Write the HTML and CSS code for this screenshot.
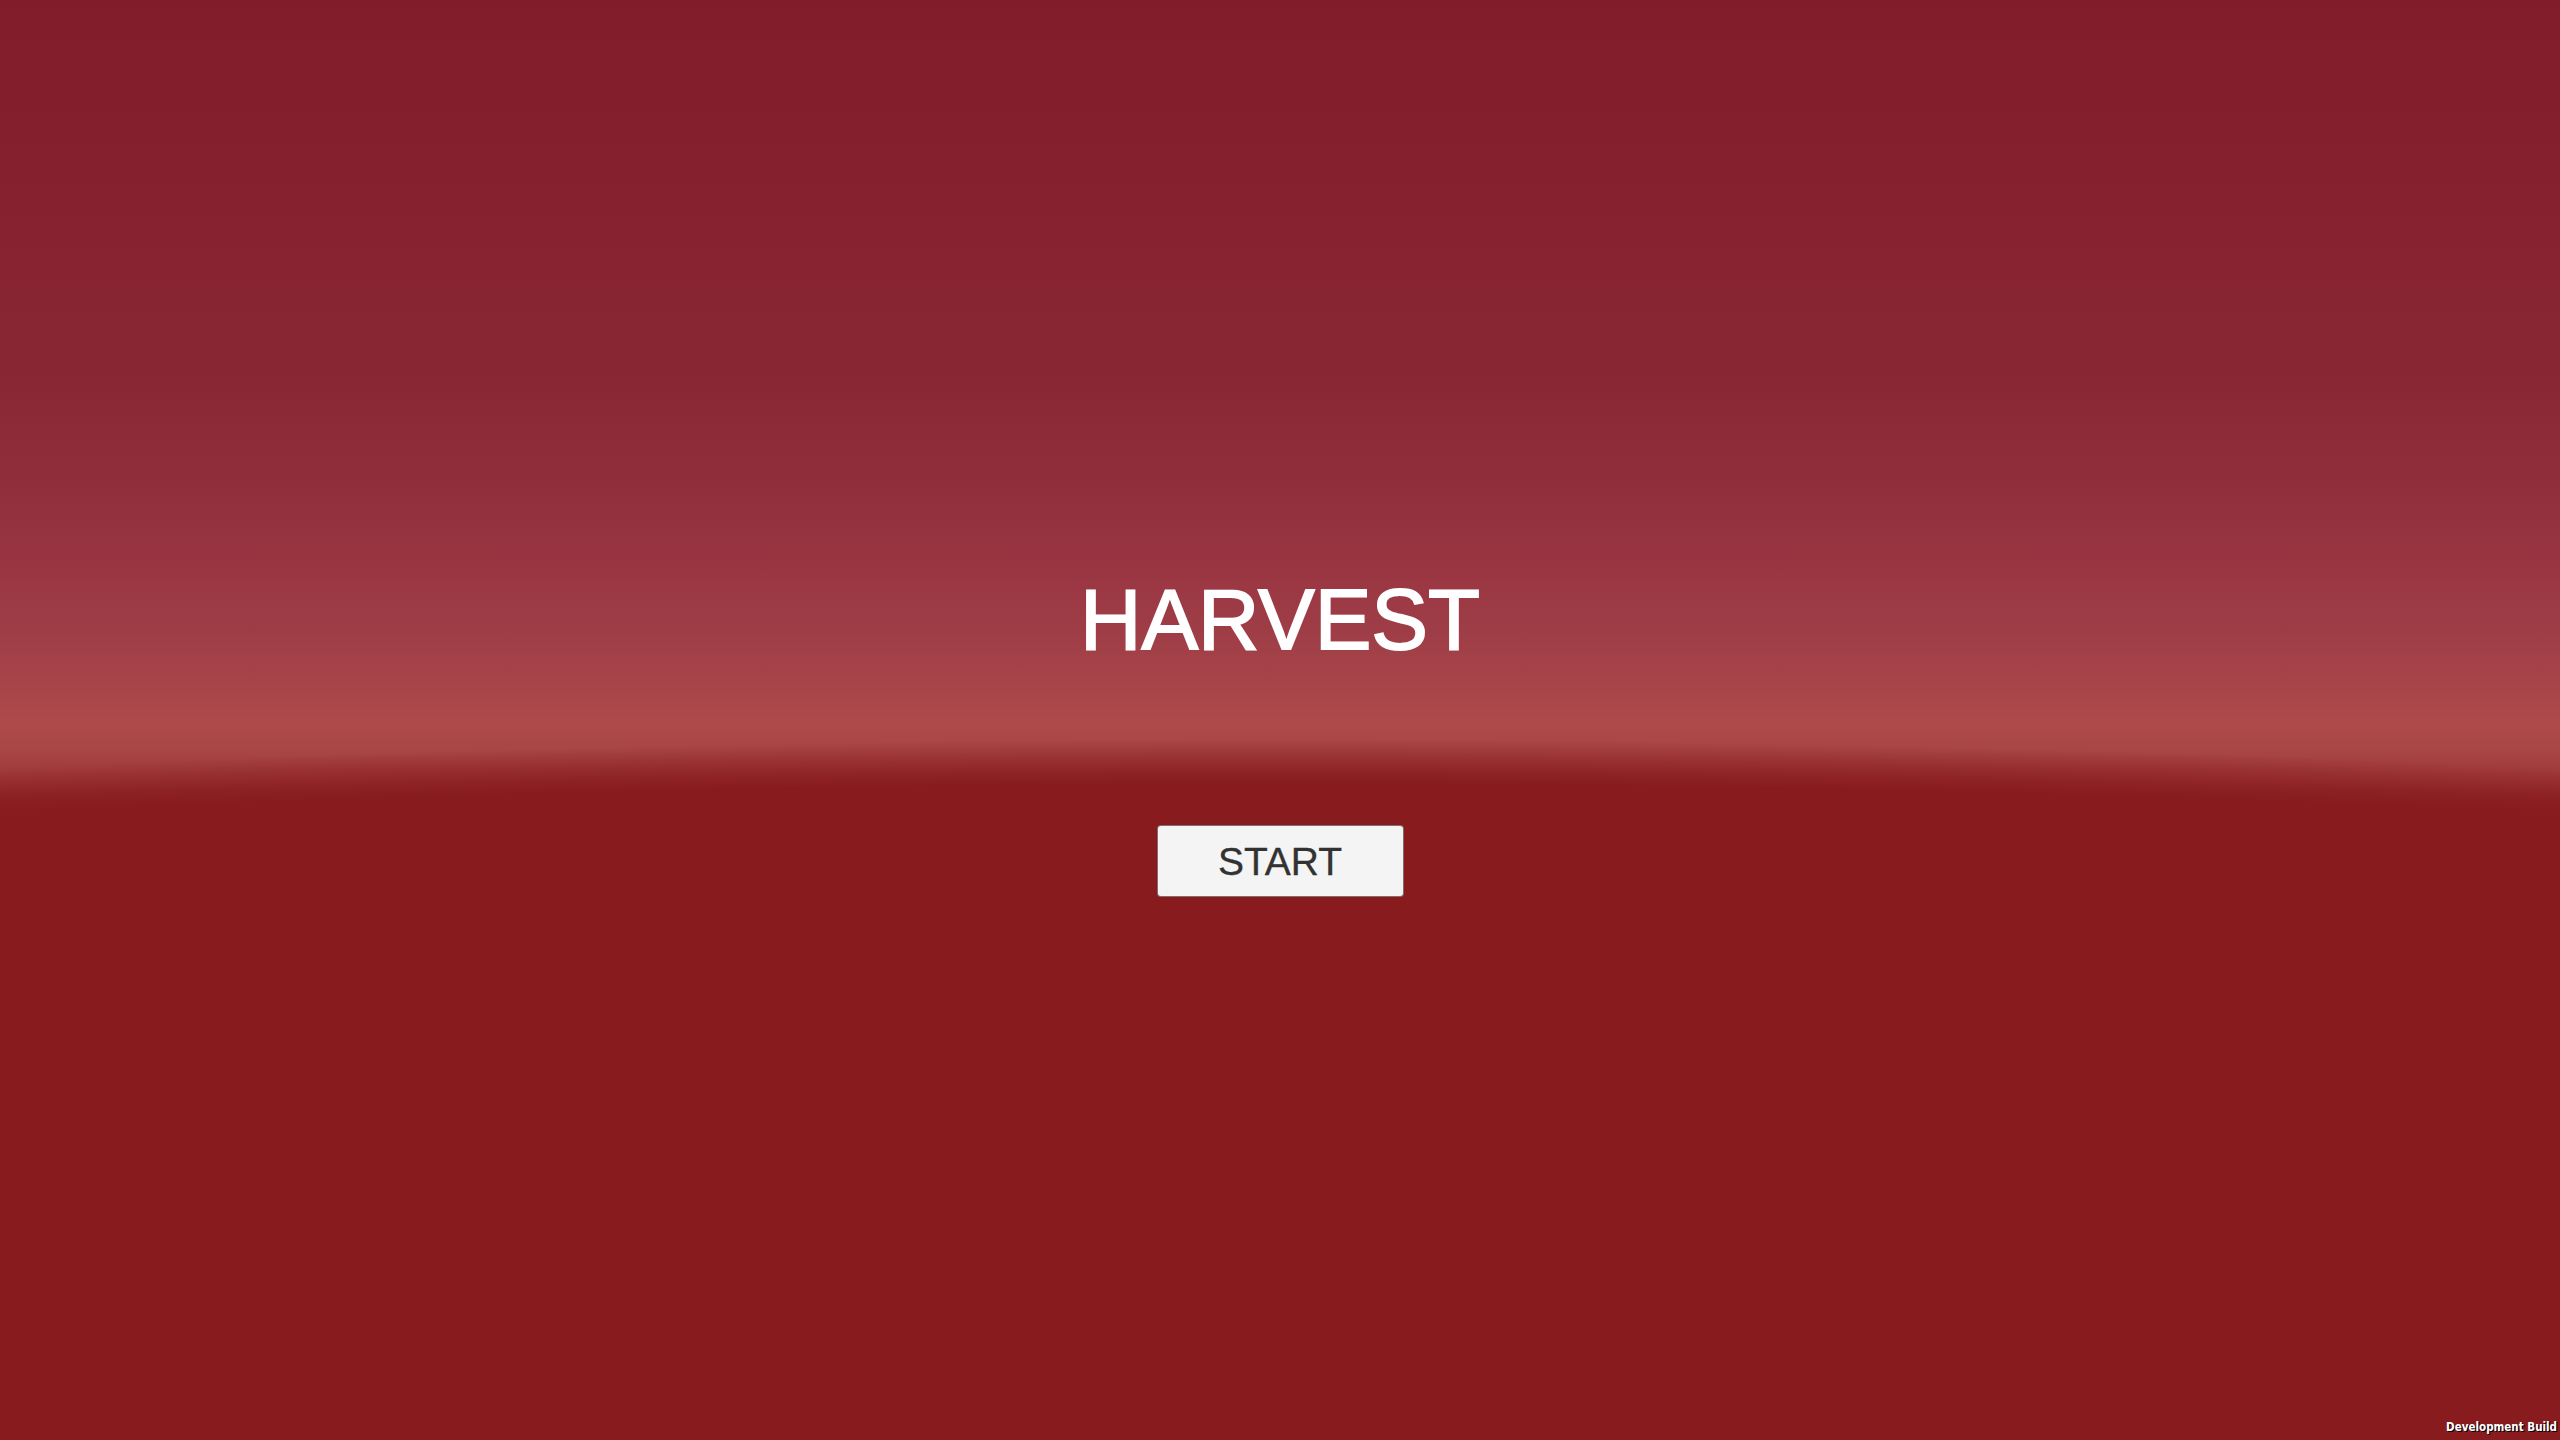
FILE: index.html
```html
<!DOCTYPE html>
<html lang="en">
<head>
<meta charset="utf-8">
<title>Harvest</title>
<link rel="stylesheet" href="styles.css">
</head>
<body>
<main class="menu">
  <h1 class="menu-title">HARVEST</h1>
  <button class="menu-button" type="button">START</button>
</main>
<div class="build-label">Development Build</div>
</body>
</html>
```
FILE: styles.css
```css
html, body {
  margin: 0;
  height: 100%;
}

body {
  position: relative;
  overflow: hidden;
  font-family: "Liberation Sans", Arial, sans-serif;
  /* ground plane with a curved, soft horizon over a tinted sky */
  background:
    radial-gradient(ellipse 5260px 1000px at 50% 1784px,
      #881b1d 0, #881b1d 100%, rgba(136, 27, 29, 0) 104.5%),
    linear-gradient(to bottom,
      #811d2a 0,
      #86222f 200px,
      #8a2734 380px,
      #912e3c 480px,
      #983541 560px,
      #9f3d47 630px,
      #a8454a 690px,
      #ae4a4a 722px,
      #a84545 752px,
      #9c3638 782px,
      #90282a 802px,
      #881b1d 818px,
      #881b1d 100%);
}

.menu {
  display: flex;
  flex-direction: column;
  align-items: center;
  padding-top: 577px;
}

.menu-title {
  margin: 0;
  font-size: 85px;
  line-height: 1;
  font-weight: 400;
  color: #ffffff;
  -webkit-text-stroke: 1.8px #ffffff;
}

.menu-button {
  margin-top: 163px;
  width: 247px;
  height: 72px;
  padding: 0;
  background: #f4f4f4;
  border: 1px solid rgba(50, 20, 20, 0.6);
  border-radius: 4px;
  font-family: "Liberation Sans", Arial, sans-serif;
  font-size: 39px;
  line-height: 1;
  color: #323232;
  -webkit-text-stroke: 0.3px #323232;
  cursor: pointer;
}

.build-label {
  position: absolute;
  right: 3px;
  bottom: 7px;
  font-family: "DejaVu Sans Condensed", "DejaVu Sans", sans-serif;
  font-stretch: condensed;
  font-weight: 700;
  font-size: 11.5px;
  line-height: 1;
  color: #ffffff;
  text-shadow: 1px 1px 0 #000000;
}
```
